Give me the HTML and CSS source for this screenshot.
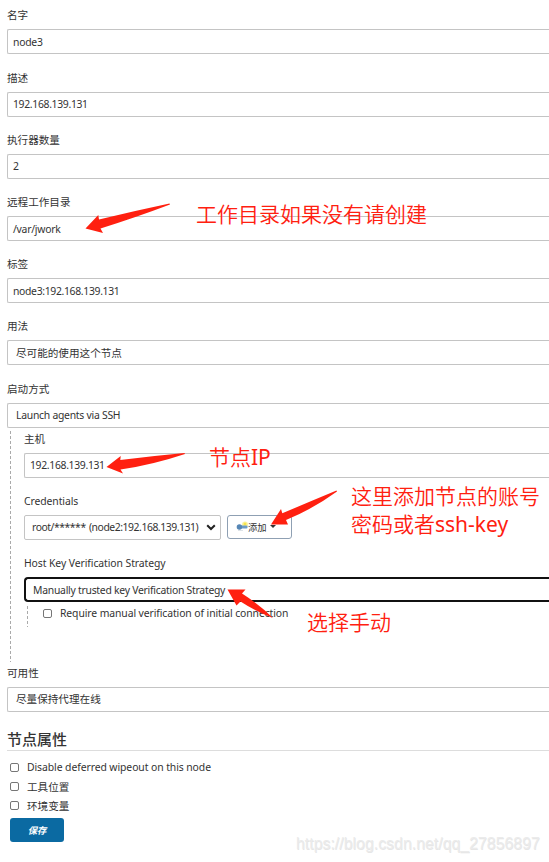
FILE: index.html
```html
<!DOCTYPE html>
<html lang="zh-CN">
<head>
    <meta charset="UTF-8">
    <meta name="viewport" content="width=device-width, initial-scale=1.0">
    <title>node3</title>
    <link rel="stylesheet" href="styles.css">
</head>
<body>
    <form class="node-form">
        <div class="field first">
            <div class="label">名字</div>
            <div class="input latin low">node3</div>
        </div>
        <div class="field">
            <div class="label">描述</div>
            <div class="input latin number">192.168.139.131</div>
        </div>
        <div class="field">
            <div class="label">执行器数量</div>
            <div class="input latin">2</div>
        </div>
        <div class="field">
            <div class="label">远程工作目录</div>
            <div class="input latin low">/var/jwork</div>
        </div>
        <div class="field">
            <div class="label">标签</div>
            <div class="input latin number low">node3:192.168.139.131</div>
        </div>
        <div class="field usage">
            <div class="label">用法</div>
            <div class="input select low">尽可能的使用这个节点</div>
        </div>
        <div class="field launcher">
            <div class="label">启动方式</div>
            <div class="input select latin">Launch agents via SSH</div>
        </div>

        <div class="nested">
            <div class="field">
                <div class="label">主机</div>
                <div class="input latin number">192.168.139.131</div>
            </div>
            <div class="field">
                <div class="label latin">Credentials</div>
                <div class="credentials">
                    <div class="input select dropdown latin number">
                        <span>root/****** (node2:192.168.139.131)</span>
                        <svg width="10" height="7" viewBox="0 0 10 7"><path d="M1.200 1.200L5 5L8.800 1.200" fill="none" stroke="#222" stroke-width="2"/></svg>
                    </div>
                    <button type="button" class="add-button">
                        <svg class="key" width="12" height="12" viewBox="0 0 12 12">
                            <circle cx="9" cy="3.500" r="3" fill="#fbf3a0"/>
                            <circle cx="9" cy="3" r="1.500" fill="#f7e34c"/>
                            <rect x="4" y="4.500" width="7.500" height="3" rx="1" fill="#6c9bc6"/>
                            <circle cx="3.400" cy="6" r="2.700" fill="#5686b5"/>
                            <path d="M2 9.500H7" stroke="#dde3e8" stroke-width="1"/>
                        </svg>
                        <span>添加</span>
                        <i class="caret"></i>
                    </button>
                </div>
            </div>
            <div class="field strategy">
                <div class="label latin">Host Key Verification Strategy</div>
                <div class="input select focused latin">Manually trusted key Verification Strategy</div>
            </div>
            <div class="nested-inner">
                <label class="check latin"><span class="box"></span><span>Require manual verification of initial connection</span></label>
            </div>
        </div>

        <div class="field availability">
            <div class="label">可用性</div>
            <div class="input select">尽量保持代理在线</div>
        </div>

        <h2>节点属性</h2>
        <div class="properties">
            <label class="check latin"><span class="box"></span><span>Disable deferred wipeout on this node</span></label>
            <label class="check"><span class="box"></span><span>工具位置</span></label>
            <label class="check"><span class="box"></span><span>环境变量</span></label>
        </div>
        <button type="button" class="save-button">保存</button>
    </form>

    <!-- red arrows -->
    <svg class="arrows" width="549" height="862" viewBox="0 0 549 862">
        <path d="M85.500 228.500L98.300 215L99 219.500Q134 211 169.500 203.500L170 204.500Q137 217 100.500 228.500L103 233Z"/>
        <path d="M106.500 467L120.700 456L120.300 460Q152 456 184.500 453L185 454Q152 465 120.500 469.500L123 473.500Z"/>
        <path d="M271 524.500L281 509L282.300 513.300Q310 501.500 336.500 490.500L337 491.500Q313 509 286 520L288 524.500Z"/>
        <path d="M227.500 589.500L245.500 589.500L242 593.500Q260 605 273 618Q255 611 240.500 601.500L236.500 605.500Z"/>
    </svg>
    <div class="note note-dir">工作目录如果没有请创建</div>
    <div class="note note-ip">节点<span>IP</span></div>
    <div class="note note-key">这里添加节点的账号<br>密码或者<span>ssh-key</span></div>
    <div class="note note-manual">选择手动</div>
    <div class="watermark">https://blog.csdn.net/qq_27856897</div>
</body>
</html>
```
FILE: styles.css
```css
* {
    box-sizing: border-box;
}

body {
    margin: 0;
    position: relative;
    height: 862px;
    overflow: hidden;
    background-color: #fff;
    color: #333;
    font-family: "Noto Sans", "Noto Sans CJK SC", sans-serif;
    font-size: 10.6px;
}

.node-form {
    padding: 6px 0 0 7px;
}

.field {
    margin-bottom: 14px;
}

.field.first,
.field.usage {
    margin-bottom: 15px;
}

.field.launcher,
.field.strategy {
    margin-bottom: 0;
}

.label {
    height: 18px;
    line-height: 18px;
    margin-bottom: 5px;
    white-space: nowrap;
}

.input {
    height: 25px;
    line-height: 23px;
    padding-left: 5px;
    border: 1px solid #c4c4c4;
    border-right: none;
    border-radius: 2px 0 0 2px;
    background-color: #fff;
    white-space: nowrap;
}

.input.low {
    line-height: 25px;
}

.input.select {
    padding-left: 8px;
}

.latin {
    font-size: 10.4px;
    letter-spacing: -0.08px;
}

.input.latin {
    letter-spacing: -0.26px;
}

.input.number {
    letter-spacing: -0.33px;
}

.input.focused {
    border: 2px solid #111;
    border-right: none;
    border-radius: 4px 0 0 4px;
    padding-left: 7px;
    line-height: 22px;
}

.nested {
    height: 232px;
    margin: 2px 0 2px 3px;
    padding-left: 14px;
    background: repeating-linear-gradient(#aaa 0 3px, transparent 3px 5px) 0 1px / 1px 100% no-repeat;
}

.nested-inner {
    height: 21px;
    margin: 4px 0 0 3px;
    padding-left: 16px;
    background: repeating-linear-gradient(#aaa 0 3px, transparent 3px 5px) 0 0 / 1px 100% no-repeat;
}

.nested-inner .check {
    height: 14px;
    letter-spacing: -0.1px;
}

.credentials {
    display: flex;
    gap: 6px;
}

.input.dropdown {
    display: flex;
    align-items: center;
    justify-content: space-between;
    width: 197px;
    padding-right: 4px;
    padding-left: 7px;
    border-right: 1px solid #c4c4c4;
    border-radius: 2px;
}

.input.dropdown.number {
    letter-spacing: -0.45px;
    word-spacing: 1px;
}

.add-button {
    display: flex;
    align-items: center;
    width: 65px;
    height: 24px;
    padding: 0 0 0 8px;
    border: 1px solid #8fa0b3;
    border-radius: 3px;
    background-color: #fff;
    color: #333;
    font-family: inherit;
    font-size: 9.3px;
}

.caret {
    margin: -2px 0 0 3px;
    border: 3px solid transparent;
    border-top-color: #333;
    border-bottom: none;
}

.check {
    display: flex;
    align-items: center;
    height: 16px;
    white-space: nowrap;
}

.box {
    width: 9px;
    height: 9px;
    margin-right: 8px;
    border: 1px solid #767676;
    border-radius: 2px;
}

h2 {
    height: 24px;
    margin: 15px 0 0;
    border-bottom: 1px solid #ddd;
    font-size: 15px;
    line-height: 24px;
    font-weight: 500;
}

.properties {
    display: flex;
    flex-direction: column;
    gap: 3px;
    padding: 8px 0 5px 3px;
}

.save-button {
    display: block;
    width: 54px;
    height: 24px;
    margin-left: 3px;
    padding: 0;
    border: none;
    border-radius: 3px;
    background-color: #0b6aa2;
    color: #fff;
    font-family: inherit;
    font-size: 9.3px;
    font-weight: bold;
    font-style: italic;
}

.arrows {
    position: absolute;
    top: 0;
    left: 0;
    fill: #ff2010;
}

.note {
    position: absolute;
    color: #ff2010;
    font-family: "Noto Sans", "Noto Sans CJK SC", sans-serif;
    font-size: 21px;
    line-height: 28px;
    font-weight: 350;
    white-space: nowrap;
}

.note span {
    font-weight: 400;
    font-size: 21px;
}

.note-dir {
    left: 196px;
    top: 200px;
}

.note-ip {
    left: 209px;
    top: 443px;
}

.note-key {
    left: 351px;
    top: 482px;
}

.note-manual {
    left: 307px;
    top: 608px;
}

.watermark {
    position: absolute;
    left: 296px;
    top: 834px;
    color: #ebebeb;
    font-family: "Liberation Sans", Arial, sans-serif;
    font-size: 15.9px;
    line-height: 20px;
    text-shadow: 0.5px 0.5px 0 #e6e6e6;
}
```
